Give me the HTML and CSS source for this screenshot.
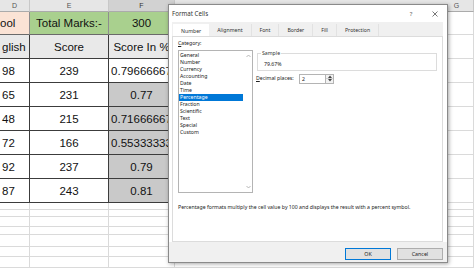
FILE: index.html
```html
<!DOCTYPE html>
<html lang="en">
<head>
    <meta charset="UTF-8">
    <meta name="viewport" content="width=device-width, initial-scale=1.0">
    <title>Format Cells</title>
    <link rel="stylesheet" href="styles.css">
</head>
<body>
    <div class="sheet">
        <div class="cell head">D</div>
        <div class="cell head">E</div>
        <div class="cell head selected">F</div>
        <div class="cell head last">G</div>

        <div class="cell top peach edge">ool</div>
        <div class="cell top green">Total Marks:-</div>
        <div class="cell top green">300</div>
        <div class="cell"></div>

        <div class="cell data label-row edge">glish</div>
        <div class="cell data label-row">Score</div>
        <div class="cell data label-row">Score In %</div>
        <div class="cell"></div>

        <div class="cell data edge">98</div>
        <div class="cell data">239</div>
        <div class="cell data">0.79666667</div>
        <div class="cell"></div>

        <div class="cell data edge">65</div>
        <div class="cell data">231</div>
        <div class="cell data shade">0.77</div>
        <div class="cell"></div>

        <div class="cell data edge">48</div>
        <div class="cell data">215</div>
        <div class="cell data shade">0.71666667</div>
        <div class="cell"></div>

        <div class="cell data edge">72</div>
        <div class="cell data">166</div>
        <div class="cell data shade">0.55333333</div>
        <div class="cell"></div>

        <div class="cell data edge">92</div>
        <div class="cell data">237</div>
        <div class="cell data shade">0.79</div>
        <div class="cell"></div>

        <div class="cell data edge">87</div>
        <div class="cell data">243</div>
        <div class="cell data shade">0.81</div>
        <div class="cell"></div>

        <div class="cell"></div><div class="cell"></div><div class="cell"></div><div class="cell"></div>
        <div class="cell"></div><div class="cell"></div><div class="cell"></div><div class="cell"></div>
        <div class="cell"></div><div class="cell"></div><div class="cell"></div><div class="cell"></div>
        <div class="cell"></div><div class="cell"></div><div class="cell"></div><div class="cell"></div>
        <div class="cell"></div><div class="cell"></div><div class="cell"></div><div class="cell"></div>
        <div class="cell"></div><div class="cell"></div><div class="cell"></div><div class="cell"></div>
        <div class="cell"></div><div class="cell"></div><div class="cell"></div><div class="cell"></div>
    </div>

    <div class="dialog">
        <div class="titlebar">
            <span class="dialog-title">Format Cells</span>
            <span class="title-btn">?</span>
            <span class="title-btn">
                <svg width="6" height="6" viewBox="0 0 6 6"><path d="M0.5 0.5L5.5 5.5M5.5 0.5L0.5 5.5" stroke="#555" stroke-width="0.8"/></svg>
            </span>
        </div>

        <div class="tabs">
            <div class="tab active">Number</div>
            <div class="tab">Alignment</div>
            <div class="tab">Font</div>
            <div class="tab">Border</div>
            <div class="tab">Fill</div>
            <div class="tab">Protection</div>
        </div>

        <div class="panel">
            <div class="panel-top">
                <div class="category">
                    <div class="field-label"><u>C</u>ategory:</div>
                    <div class="listbox">
                        <ul class="list">
                            <li>General</li>
                            <li>Number</li>
                            <li>Currency</li>
                            <li>Accounting</li>
                            <li>Date</li>
                            <li>Time</li>
                            <li class="picked">Percentage</li>
                            <li>Fraction</li>
                            <li>Scientific</li>
                            <li>Text</li>
                            <li>Special</li>
                            <li>Custom</li>
                        </ul>
                        <div class="scrollbar">
                            <svg width="5" height="4" viewBox="0 0 5 4"><path d="M0.5 3L2.5 1L4.5 3" fill="none" stroke="#a6a6a6" stroke-width="0.8"/></svg>
                            <svg width="5" height="4" viewBox="0 0 5 4"><path d="M0.5 1L2.5 3L4.5 1" fill="none" stroke="#a6a6a6" stroke-width="0.8"/></svg>
                        </div>
                    </div>
                </div>

                <div class="options">
                    <fieldset class="sample">
                        <legend>Sample</legend>
                        <div class="sample-value">79.67%</div>
                    </fieldset>
                    <div class="decimals">
                        <span class="decimals-label"><u>D</u>ecimal places:</span>
                        <div class="spin">
                            <span class="spin-value">2</span>
                            <div class="spin-btns">
                                <span class="spin-btn"><svg width="4" height="3" viewBox="0 0 4 3"><path d="M0 3L2 0.5L4 3Z" fill="#444"/></svg></span>
                                <span class="spin-btn"><svg width="4" height="3" viewBox="0 0 4 3"><path d="M0 0L2 2.5L4 0Z" fill="#444"/></svg></span>
                            </div>
                        </div>
                    </div>
                </div>
            </div>

            <p class="description">Percentage formats multiply the cell value by 100 and displays the result with a percent symbol.</p>
        </div>

        <div class="footer">
            <button class="btn default">OK</button>
            <button class="btn">Cancel</button>
        </div>
    </div>
</body>
</html>
```

FILE: styles.css
```css
* {
    margin: 0;
    padding: 0;
    box-sizing: border-box;
}

body {
    position: relative;
    width: 474px;
    height: 269px;
    overflow: hidden;
    background-color: #fff;
    color: #111;
    font-family: "Liberation Sans", Arial, sans-serif;
}

/* Spreadsheet behind the dialog */
.sheet {
    display: grid;
    grid-template-columns: 30px 79px 66px 299px;
    grid-template-rows: 12px 23px 24px repeat(6, 24px) 7px 7px 10px 8px 12px 10px 11px;
    font-size: 11.5px;
}

.cell {
    display: flex;
    align-items: center;
    justify-content: center;
    overflow: hidden;
    white-space: nowrap;
    border-right: 1px solid #dadada;
    border-bottom: 1px solid #dadada;
}

.cell.edge {
    justify-content: flex-start;
    padding-left: 2px;
}

.cell.top.edge {
    padding-left: 0;
}

.head {
    background-color: #e6e6e6;
    color: #555;
    font-size: 7px;
    border-right-color: #c8c8c8;
    border-bottom-color: #ababab;
}

.head.selected {
    background-color: #d2d2d2;
    color: #333;
}

/* only the right end of column G shows beside the dialog */
.head.last {
    padding-left: 265px;
}

.top {
    border-right-color: #8e8e8e;
    border-bottom-color: #6a6a6a;
}

.data {
    border-right-color: #3c3c3c;
    border-bottom-color: #3c3c3c;
}

.peach {
    background-color: #fbe3d5;
}

.green {
    background-color: #a9d08e;
}

.label-row {
    background-color: #e9e9e9;
}

.shade {
    background-color: #c9c9c9;
}

/* Format Cells dialog */
.dialog {
    position: absolute;
    left: 168px;
    top: 4px;
    width: 280px;
    height: 259px;
    display: flex;
    flex-direction: column;
    background-color: #fff;
    border: 1px solid #8a8a8a;
    box-shadow: 1px 1px 4px rgba(0, 0, 0, 0.35);
    font-family: "Noto Sans", "Open Sans", sans-serif;
    font-size: 5.2px;
    color: #222;
}

.titlebar {
    display: flex;
    align-items: center;
    height: 17px;
    flex-shrink: 0;
}

.dialog-title {
    flex: 1;
    padding-left: 3px;
    font-size: 6.2px;
    color: #333;
}

.title-btn {
    display: flex;
    align-items: center;
    justify-content: center;
    width: 24px;
    height: 17px;
    font-size: 6px;
    color: #555;
}

.tabs {
    display: flex;
    align-items: flex-end;
    height: 14px;
    flex-shrink: 0;
    margin: 0 4px 0 3px;
    padding-left: 1px;
    background-color: #f0f0f0;
}

.tab {
    display: flex;
    align-items: center;
    justify-content: center;
    height: 12px;
    padding: 0 8px;
    color: #333;
    border-right: 1px solid #e2e2e2;
}

.tab.active {
    background-color: #fff;
    border-right: none;
    margin-bottom: -1px;
    height: 13px;
}

.panel {
    display: flex;
    flex-direction: column;
    height: 206px;
    flex-shrink: 0;
    margin: 0 4px 0 3px;
    padding: 3px 5px 0 5px;
    border: 1px solid #dcdcdc;
}

.panel-top {
    display: flex;
}

.field-label,
.decimals-label,
.description,
.list li {
    line-height: 7px;
}

.listbox {
    display: flex;
    width: 75px;
    height: 143px;
    margin-top: 3px;
    border: 1px solid #b4b4b4;
}

.list {
    flex: 1;
    list-style: none;
    padding-top: 0.5px;
}

.list li {
    padding-left: 1px;
    color: #222;
}

.list li.picked {
    background-color: #0078d7;
    color: #fff;
}

.scrollbar {
    display: flex;
    flex-direction: column;
    justify-content: space-between;
    align-items: center;
    width: 9px;
    padding: 3px 0 3px 1px;
}

.options {
    display: flex;
    flex-direction: column;
    width: 180px;
    margin-left: 4px;
}

.sample {
    margin-top: 10px;
    padding: 0 6px 2px 6px;
    border: 1px solid #dcdcdc;
}

.sample legend {
    margin-left: -3px;
    padding: 0 1px;
    line-height: 7px;
    color: #333;
}

.sample-value {
    margin-top: 4px;
    line-height: 7px;
}

.decimals {
    display: flex;
    align-items: center;
    height: 10px;
    margin-top: 2.5px;
}

.decimals-label {
    width: 43px;
    margin-left: -1px;
}

.spin {
    display: flex;
    height: 10px;
}

.spin-value {
    width: 27px;
    padding-left: 2px;
    line-height: 8px;
    border: 1px solid #b4b4b4;
}

.spin-btns {
    display: flex;
    flex-direction: column;
    width: 8px;
    border: 1px solid #b4b4b4;
    border-left: none;
}

.spin-btn {
    flex: 1;
    display: flex;
    align-items: center;
    justify-content: center;
    background-color: #f2f2f2;
}

.spin-btn + .spin-btn {
    border-top: 1px solid #d0d0d0;
}

.description {
    margin-top: 11px;
}

.footer {
    flex: 1;
    display: flex;
    justify-content: flex-end;
    align-items: flex-start;
    gap: 6px;
    padding: 6px 4px 0 0;
    background-color: #f0f0f0;
}

.btn {
    width: 46px;
    height: 12px;
    font-family: inherit;
    font-size: 5.3px;
    color: #222;
    background-color: #e1e1e1;
    border: 1px solid #adadad;
}

.btn.default {
    border-color: #0078d7;
}
```
